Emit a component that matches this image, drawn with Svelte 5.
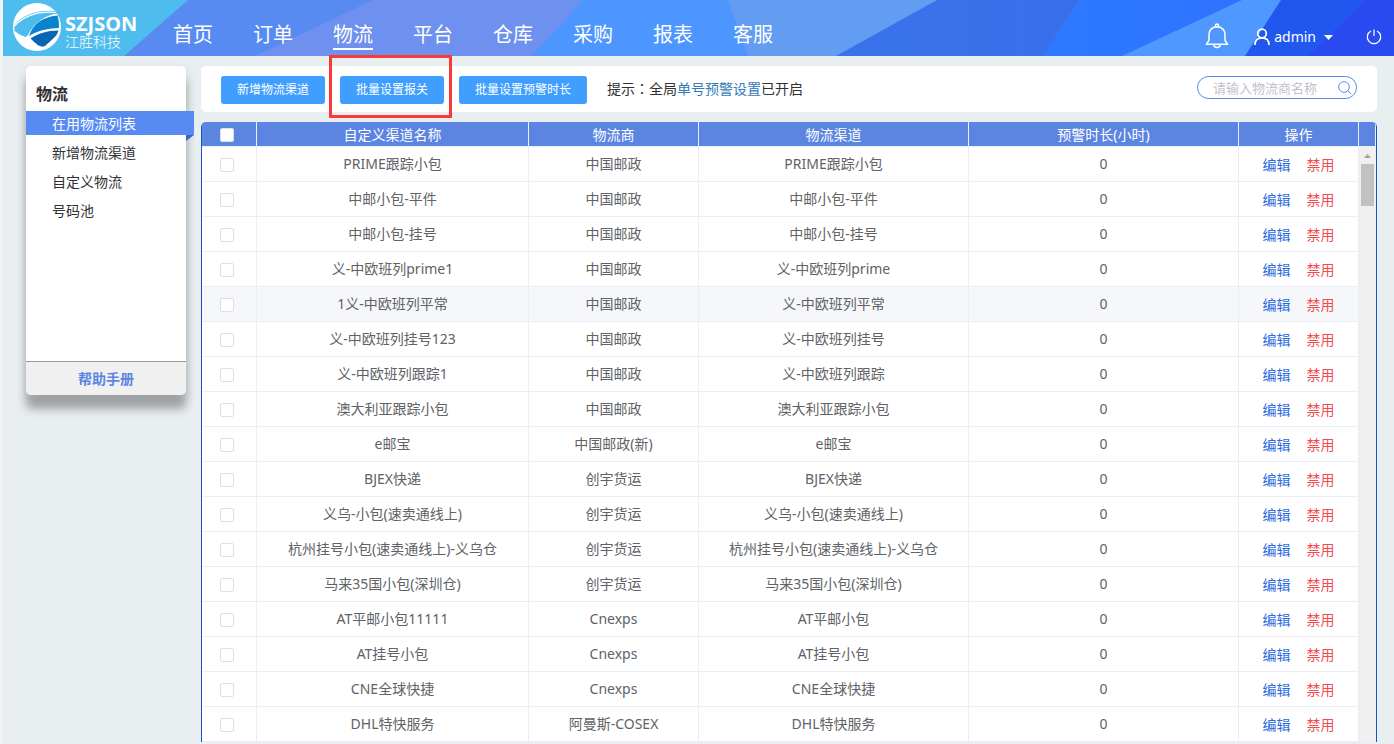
<script>
  const nav = ['首页', '订单', '物流', '平台', '仓库', '采购', '报表', '客服'];
  const menu = ['在用物流列表', '新增物流渠道', '自定义物流', '号码池'];
  const rows = [
    ['PRIME跟踪小包', '中国邮政', 'PRIME跟踪小包'],
    ['中邮小包-平件', '中国邮政', '中邮小包-平件'],
    ['中邮小包-挂号', '中国邮政', '中邮小包-挂号'],
    ['义-中欧班列prime1', '中国邮政', '义-中欧班列prime'],
    ['1义-中欧班列平常', '中国邮政', '义-中欧班列平常'],
    ['义-中欧班列挂号123', '中国邮政', '义-中欧班列挂号'],
    ['义-中欧班列跟踪1', '中国邮政', '义-中欧班列跟踪'],
    ['澳大利亚跟踪小包', '中国邮政', '澳大利亚跟踪小包'],
    ['e邮宝', '中国邮政(新)', 'e邮宝'],
    ['BJEX快递', '创宇货运', 'BJEX快递'],
    ['义乌-小包(速卖通线上)', '创宇货运', '义乌-小包(速卖通线上)'],
    ['杭州挂号小包(速卖通线上)-义乌仓', '创宇货运', '杭州挂号小包(速卖通线上)-义乌仓'],
    ['马来35国小包(深圳仓)', '创宇货运', '马来35国小包(深圳仓)'],
    ['AT平邮小包11111', 'Cnexps', 'AT平邮小包'],
    ['AT挂号小包', 'Cnexps', 'AT挂号小包'],
    ['CNE全球快捷', 'Cnexps', 'CNE全球快捷'],
    ['DHL特快服务', '阿曼斯-COSEX', 'DHL特快服务'],
  ];
  let current = $state('在用物流列表');
  let highlighted = $state(4);
</script>

<div class="page">
  <header>
    <svg class="backdrop" viewBox="0 0 1391 56" preserveAspectRatio="none" aria-hidden="true">
      <defs>
        <linearGradient id="deep"><stop offset="0" stop-color="#3873ea" /><stop offset="1" stop-color="#3b69ec" /></linearGradient>
        <linearGradient id="vivid"><stop offset="0" stop-color="#2d7aff" /><stop offset="1" stop-color="#306cff" /></linearGradient>
      </defs>
      <rect width="1391" height="56" fill="#4fbcee" />
      <path d="M185 0H1391V56H121Z" fill="#588bf1" />
      <path d="M370 0H1391V56H252Z" fill="#6e90ee" />
      <path d="M580 0H1391V56H529Z" fill="#4d96ff" />
      <path d="M725 0H1391V56H745Z" fill="#639df1" />
      <path d="M934 0H1391V56H833Z" fill="url(#deep)" />
      <path d="M1076 0H1391V56H1040Z" fill="url(#vivid)" />
      <path d="M1239 0H1391V56H1119Z" fill="#4f98ff" />
      <path d="M1278 0H1391V56H1242Z" fill="#2157ef" />
      <path d="M1363 0H1391V56H1305Z" fill="#2949f1" />
    </svg>
    <a class="logo" href="#home">
      <svg width="48" height="48" viewBox="0 0 48 48" aria-hidden="true">
        <circle cx="24" cy="24" r="24" fill="#fff" />
        <path d="M1.500 22C10 12 24 6.500 41 8L44 10.500C34 12 22 18 15 32L13 34Q6 32 1.500 28Z" fill="#4fbcee" />
        <path d="M1.500 23C11 13 26 8 43 9.500" fill="none" stroke="#fff" stroke-width="1.200" />
        <path d="M16 33C20 21 29 14 44.500 12.500Q46.500 18 46 25C33 25.500 24 28 16 33Z" fill="#0a83cf" />
        <path d="M17.500 35.500C25 30.500 34 27.500 45.500 27.500C44 34 37 38 32 43C28 45 24 42 17.500 35.500Z" fill="#0767b5" />
      </svg>
      <span class="brand"><strong>SZJSON</strong><span>江胜科技</span></span>
    </a>
    <nav>
      {#each nav as item}
        <a href="#{item}" class:active={item === '物流'}>{item}</a>
      {/each}
    </nav>
    <div class="account">
      <button class="bell" aria-label="通知">
        <svg width="24" height="26" viewBox="0 0 24 26" fill="none" stroke="#fff" stroke-width="1.500">
          <circle cx="12" cy="2.500" r="1.500" />
          <path d="M4 17V11.500C4 7 7.500 3.700 12 3.700S20 7 20 11.500V17C20 19 22.500 19.500 22.500 21.200H1.500C1.500 19.500 4 19 4 17Z" />
          <path d="M9 22C9 25.200 15 25.200 15 22" />
        </svg>
      </button>
      <button class="user">
        <svg width="16" height="18" viewBox="0 0 16 18" fill="none" stroke="#fff" stroke-width="1.700">
          <circle cx="8" cy="5.500" r="4.300" />
          <path d="M1 17C1 12.500 3.500 9.800 8 9.800S15 12.500 15 17" />
        </svg>
        <span>admin</span>
        <svg class="caret" width="9" height="5" viewBox="0 0 9 5"><path d="M0 0H9L4.500 5Z" fill="#fff" /></svg>
      </button>
      <button class="power" aria-label="退出">
        <svg width="16" height="16" viewBox="0 0 16 16" fill="none" stroke="#fff" stroke-width="1.200">
          <path d="M5 2A6.700 6.700 0 1 0 11 2M8 .5V7" />
        </svg>
      </button>
    </div>
  </header>

  <div class="body">
    <aside>
      <h2>物流</h2>
      <ul>
        {#each menu as item}
          <li><a href="#{item}" class:active={item === current} onclick={() => (current = item)}>{item}</a></li>
        {/each}
      </ul>
      <a class="manual" href="#manual">帮助手册</a>
    </aside>

    <main>
      <section class="toolbar">
        <button class="primary">新增物流渠道</button>
        <button class="primary marked">批量设置报关</button>
        <button class="primary">批量设置预警时长</button>
        <p>提示<span class="colon">：</span>全局<a href="#warning">单号预警设置</a>已开启</p>
        <label class="search">
          <input type="text" placeholder="请输入物流商名称" aria-label="物流商名称" />
          <svg width="14" height="14" viewBox="0 0 14 14" fill="none" stroke="#568af0"><circle cx="6" cy="6" r="5.300" /><path d="M9.800 9.800L13.300 13" /></svg>
        </label>
      </section>

      <section class="grid">
        <table>
          <colgroup>
            <col class="c-check" /><col class="c-name" /><col class="c-vendor" /><col class="c-wide" /><col class="c-wide" /><col class="c-ops" />
          </colgroup>
          <thead>
            <tr>
              <th><input type="checkbox" aria-label="全选" /></th>
              <th>自定义渠道名称</th>
              <th>物流商</th>
              <th>物流渠道</th>
              <th>预警时长(小时)</th>
              <th>操作</th>
            </tr>
          </thead>
          <tbody>
            {#each rows as [name, vendor, channel], i}
              <tr class:hover={i === highlighted} onmouseenter={() => (highlighted = i)}>
                <td><input type="checkbox" aria-label={name} /></td>
                <td>{name}</td>
                <td>{vendor}</td>
                <td>{channel}</td>
                <td>0</td>
                <td><div class="ops"><a href="#edit">编辑</a><a class="danger" href="#disable">禁用</a></div></td>
              </tr>
            {/each}
          </tbody>
        </table>
        <div class="gutter">
          <div class="cap"></div>
          <div class="track">
            <svg width="7" height="4" viewBox="0 0 7 4"><path d="M0 4L3.500 0L7 4Z" fill="#a3a3a3" /></svg>
            <div class="thumb"></div>
          </div>
        </div>
      </section>
    </main>
  </div>
</div>

<style>
  :global(body) {
    margin: 0;
    background: #e9eef1;
  }
  .page, .page * { box-sizing: border-box; }
  .page {
    min-height: 100vh;
    border-left: 3px solid #f0f1f2;
    background: #e9eef1;
    color: #303133;
    font: 14px/20px "Noto Sans", "Noto Sans CJK SC", sans-serif;
  }
  a { color: inherit; text-decoration: none; }
  button, input { font: inherit; }
  button { border: 0; padding: 0; background: none; color: inherit; cursor: pointer; }

  header {
    position: relative;
    display: flex;
    height: 56px;
    color: #fff;
  }
  .backdrop { position: absolute; inset: 0; width: 100%; height: 100%; }
  .logo, nav, .account { position: relative; display: flex; }
  .logo { align-items: flex-start; gap: 4px; width: 170px; padding: 3px 0 0 10px; }
  .brand { display: flex; flex-direction: column; padding-top: 10px; }
  .brand strong { font-size: 20px; line-height: 21px; }
  .brand span { font-size: 14px; line-height: 16px; font-weight: 300; }
  nav { gap: 40px; padding-top: 20px; font-size: 20px; line-height: 30px; }
  nav a { height: 30px; white-space: nowrap; }
  nav a.active { border-bottom: 2px solid #fff; }
  .account { align-items: center; margin-left: auto; padding: 18px 12px 0 0; }
  .account svg { display: block; }
  .bell { margin-right: 25px; padding-bottom: 2px; }
  .user { display: flex; align-items: center; gap: 4px; margin-right: 33px; }
  .caret { margin-left: 4px; }

  .body { display: flex; align-items: flex-start; padding: 10px 17px 0 23px; }
  aside {
    display: flex;
    flex-direction: column;
    flex: none;
    width: 160px;
    min-height: 329px;
    margin-right: 15px;
    border-radius: 5px;
    background: #fff;
    box-shadow: 0 14px 10px #9fa3a5, 0 4px 10px #c5caccaa;
  }
  h2 { margin: 0; padding: 18px 10px 7px; font-size: 16px; line-height: 20px; }
  ul { display: flex; flex-direction: column; gap: 5px; margin: 0; padding: 0; list-style: none; }
  li a { display: block; height: 24px; padding-left: 26px; line-height: 26px; }
  li a.active { position: relative; width: 168px; background: #588bf1; color: #fff; }
  li a.active::after {
    content: "";
    position: absolute;
    top: 100%;
    right: 0;
    width: 8px;
    height: 6px;
    background: #3c66c4;
    clip-path: polygon(0 0, 100% 0, 0 100%);
  }
  .manual {
    margin-top: auto;
    border-top: 1px solid #9b9b9b;
    border-radius: 0 0 5px 5px;
    background: #f0f0f0;
    color: #5c85e2;
    font-weight: 700;
    line-height: 33px;
    text-align: center;
  }

  main { flex: 1; min-width: 0; }
  .toolbar {
    display: flex;
    align-items: flex-start;
    gap: 15px;
    padding: 10px 20px 8px;
    border-radius: 5px;
    background: #fff;
  }
  .primary {
    height: 28px;
    padding: 0 16px;
    border-radius: 3px;
    background: #409eff;
    color: #fff;
    font-size: 12px;
    white-space: nowrap;
  }
  .marked { position: relative; }
  .marked::after {
    content: "";
    position: absolute;
    inset: -21px -8px -14px -11px;
    border: 3px solid #fb3939;
    pointer-events: none;
  }
  .toolbar p { margin: 0 0 0 5px; line-height: 24px; white-space: nowrap; }
  .toolbar p a { color: #337ab7; }
  .colon { font-family: "Noto Sans CJK TC", sans-serif; }
  .search {
    display: flex;
    align-items: center;
    width: 160px;
    height: 23px;
    margin-left: auto;
    padding: 0 4px 0 15px;
    border: 1px solid #568af0;
    border-radius: 12px;
  }
  .search input { flex: 1; min-width: 0; padding: 0; border: 0; outline: 0; background: none; font-size: 13px; line-height: 20px; }
  .search input::placeholder { color: #bfc3cc; opacity: 1; }

  .grid {
    display: flex;
    margin-top: 10px;
    overflow: hidden;
    border: solid #1754cb;
    border-width: 0 1px;
    border-radius: 5px 5px 0 0;
    background: #fff;
  }
  table { flex: 1; width: 100%; border-collapse: separate; border-spacing: 0; table-layout: fixed; color: #606266; }
  .c-check { width: 55px; }
  .c-name { width: 272px; }
  .c-vendor { width: 170px; }
  .c-wide { width: 270px; }
  .c-ops { width: 120px; }
  th, td { padding: 0; border: solid #ebeef5; border-width: 0 1px 1px 0; text-align: center; white-space: nowrap; }
  th { height: 25px; padding-top: 2px; background: #5c85e2; color: #fff; font-weight: 400; }
  td { height: 35px; }
  tr.hover td { background: #f5f7fa; }
  td:first-child, th:first-child { padding: 2px 5px 0 0; }
  input[type="checkbox"] {
    display: block;
    appearance: none;
    width: 14px;
    height: 14px;
    margin: 0 auto;
    border: 1px solid #dcdfe6;
    border-radius: 2px;
    background: #fff;
  }
  input[type="checkbox"]:checked { background: #409eff; }
  .ops { display: flex; justify-content: center; gap: 16px; padding-top: 1px; color: #2a6be0; }
  .danger { color: #f34b50; }
  .gutter { display: flex; flex-direction: column; flex: none; width: 17px; background: #f0f0f0; }
  .cap { height: 25px; border-right: 1px solid #ebeef5; border-bottom: 1px solid #ebeef5; background: #5c85e2; }
  .track { display: flex; flex-direction: column; align-items: center; gap: 6px; padding-top: 7px; }
  .thumb { width: 13px; height: 42px; background: #c1c1c1; }
</style>
